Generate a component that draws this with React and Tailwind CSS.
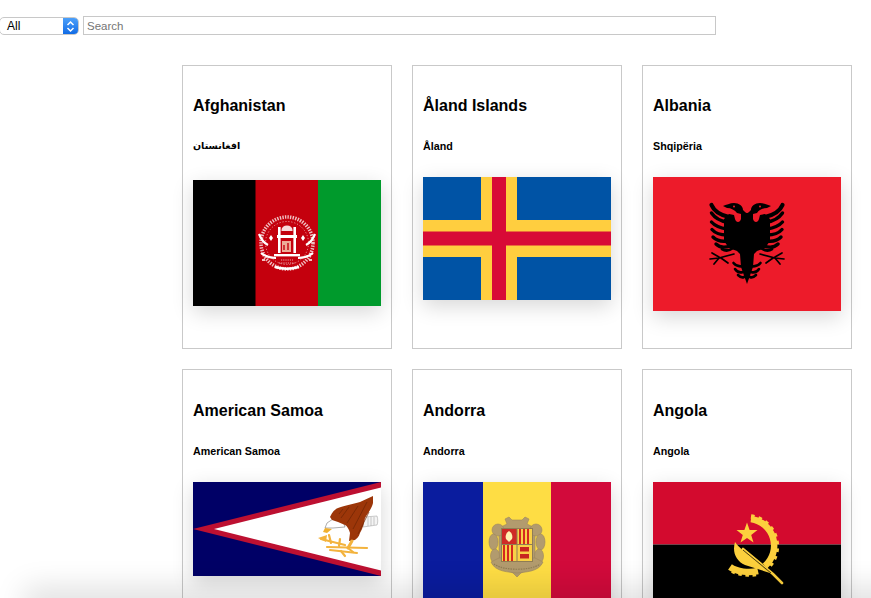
import React from "react";

const AfghanFlag = () => (
  <svg viewBox="0 0 188 126" className="block h-full w-full">
    <rect width="188" height="126" fill="#c4000d" />
    <rect width="62.5" height="126" fill="#000" />
    <rect x="125" width="63" height="126" fill="#009a2c" />
    <g fill="none" stroke="#fff">
      {/* wreath */}
      <circle cx="94" cy="63" r="26" strokeWidth="3.6" strokeDasharray="1.4 1.2" opacity=".75" />
      <circle cx="94" cy="63" r="21.5" strokeWidth="1" strokeDasharray="1.2 1.8" opacity=".55" />
      <path d="M66 54c2 5 5 9 9 11M122 54c-2 5-5 9-9 11M68 73c5 4 10 5 15 5M120 73c-5 4-10 5-15 5" strokeWidth="2.2" />
      <path d="M82 87c7 2 17 2 24 0" strokeWidth="2.4" />
      <path d="M72 80h-3M116 80h3" strokeWidth="1.5" />
    </g>
    {/* mosque */}
    <g fill="#fff">
      <path d="M88.5 50a5.5 4.6 0 0 1 11 0v1h-11z" opacity=".85" />
      <rect x="85" y="47" width="2.6" height="8" />
      <rect x="100.4" y="47" width="2.6" height="8" />
      <rect x="84" y="55" width="20" height="3" />
      <rect x="85" y="58" width="2.6" height="15" />
      <rect x="100.4" y="58" width="2.6" height="15" />
      <rect x="81" y="74" width="26" height="2.4" />
      <path d="M76 58l2-3 2 3-2 3zM112 58l-2-3-2 3 2 3z" />
    </g>
    <path d="M89 61h9v11h-9z" fill="#f3c9b0" opacity=".85" />
    <path d="M90 65h2v5h-2zM94 63h2v7h-2z" fill="#c4000d" opacity=".7" />
    <path d="M88 80h12M86 83h16" stroke="#fff" strokeWidth=".8" strokeDasharray="1.2 1" opacity=".8" />
  </svg>
);

const AlandFlag = () => (
  <svg viewBox="0 0 188 123" className="block h-full w-full">
    <rect width="188" height="123" fill="#0053a5" />
    <rect x="58" width="36" height="123" fill="#ffce3f" />
    <rect y="43" width="188" height="37" fill="#ffce3f" />
    <rect x="69" width="14" height="123" fill="#d80a36" />
    <rect y="54.5" width="188" height="14" fill="#d80a36" />
  </svg>
);

const AlbaniaFlag = () => {
  const half = (
    <g>
      {/* head */}
      <path d="M94 37 L90 33 C90 29 86 26 81 26 C77 26 73 28 70 29 L74 31 C78 31 82 33 84 36 L88 37z" fill="#000" />
      {/* body */}
      <path d="M94 36 L88 35 L88 42 C87 46 83 46 82 42 L81 38 L76 37 L71 42 L71 64 L76 71 L84 74 L87 77 L88 90 L94 107z" fill="#000" />
      {/* wing feathers */}
      <g fill="none" stroke="#000" strokeLinecap="round" strokeWidth="3.4">
        <path d="M58.5 28 C61 34 67 38 76 40" strokeWidth="4.2" />
        <path d="M58.5 36 C62 41 67 44 74 45" />
        <path d="M58.5 45 C62 49 67 51 74 52" />
        <path d="M59 52.5 C62 56 67 58 74 58" />
        <path d="M60 60 C63 63 67 65 74 64" />
        <path d="M63 67 C66 70 71 71 77 69" />
        <path d="M69 72 C72 74 76 74 80 71" strokeWidth="2.8" />
      </g>
      {/* tail feathers */}
      <g fill="none" stroke="#000" strokeLinecap="round" strokeWidth="2.6">
        <path d="M80.5 86 C83 89 86 90 90 89" />
        <path d="M82 92 C84 95 87 96 90 95" />
        <path d="M85 98 C87 100 89 101 91 100" />
      </g>
      {/* legs */}
      <g fill="none" stroke="#000" strokeLinecap="round" strokeWidth="1.7">
        <path d="M81 77 L66 81 L57 82" />
        <path d="M66 80 L59 76" />
        <path d="M66 81 L61 87" />
        <path d="M68 81 L75 86" />
      </g>
    </g>
  );
  return (
    <svg viewBox="0 0 188 134" className="block h-full w-full">
      <rect width="188" height="134" fill="#ed1b2a" />
      {half}
      <g transform="matrix(-1 0 0 1 188 0)">{half}</g>
      <circle cx="81" cy="29.5" r="1" fill="#ed1b2a" />
      <circle cx="107" cy="29.5" r="1" fill="#ed1b2a" />
    </svg>
  );
};

const SamoaFlag = () => (
  <svg viewBox="0 0 188 94" className="block h-full w-full">
    <rect width="188" height="94" fill="#000066" />
    <path d="M188 0V94L0 47z" fill="#bd1031" />
    <path d="M188 5.5V88.5L21 47z" fill="#fff" />
    {/* tail */}
    <path d="M171 35 L184 34 C185 37 185 41 184 43 L170 45z" fill="#f4f4f4" stroke="#999" strokeWidth=".5" />
    <path d="M175 35v9M178 35v9M181 35v8" stroke="#aaa" strokeWidth=".6" />
    {/* head */}
    <path d="M149 36 L140 37 L134 41 L132 46 L140 46 L152 45z" fill="#fff" stroke="#777" strokeWidth=".6" />
    <path d="M132 46 L130 50 L134 51 L139 47z" fill="#f0b030" />
    {/* wing and body */}
    <path d="M137 35 C139 30 142 27 145 26 C150 24 160 22 167 20 L180 14 L180 21 C179 26 175 31 172 36 C171 41 170 46 167 51 C166 55 163 57 162 58 L156 59 L157 51 C156 47 154 44 152 43 L145 40 L139 38z" fill="#9c3609" />
    <path d="M148 36 L156 25M154 41 L165 24M160 47 L174 20M165 52 L176 30M146 32 L150 27" stroke="#6e2505" strokeWidth=".7" fill="none" />
    {/* talons */}
    <g stroke="#f3b33d" strokeLinecap="round" fill="none">
      <path d="M128 57 L152 63" strokeWidth="2.2" />
      <path d="M134 65 L174 66" strokeWidth="2.2" />
      <path d="M137 68 L164 71" strokeWidth="2" />
      <path d="M159 59 L155 66" strokeWidth="3" />
      <path d="M136 53 L138 61M147 57 L146 64M148 69 L152 74M155 66 L160 70" strokeWidth="2.2" />
    </g>
    <path d="M125 56 L134 53 L133 60z" fill="#f3b33d" />
  </svg>
);

const AndorraFlag = () => (
  <svg viewBox="0 0 188 131" className="block h-full w-full">
    <rect width="188" height="131" fill="#fedd44" />
    <rect width="60" height="131" fill="#0a1c9e" />
    <rect x="128" width="60" height="131" fill="#d20a3b" />
    {/* surround with scrolls */}
    <g fill="#b29b6e" stroke="#9c875e" strokeWidth=".6">
      <path d="M76 46 L84 42 L82 37 L86 35 L89 38 L99 38 L102 35 L106 37 L104 42 L112 46 L112 84 L98 91 L94 95 L90 91 L76 84z" />
      <circle cx="75" cy="48" r="6" />
      <circle cx="113" cy="48" r="6" />
      <ellipse cx="70.5" cy="60" rx="4.5" ry="8" />
      <ellipse cx="117.5" cy="60" rx="4.5" ry="8" />
      <ellipse cx="72" cy="74" rx="4.5" ry="7" />
      <ellipse cx="116" cy="74" rx="4.5" ry="7" />
      <path d="M68 80 C72 90 86 90 94 91 C102 90 116 90 120 80 L112 76 L76 76z" />
    </g>
    <rect x="78" y="46" width="32" height="34" fill="#8f7d55" />
    {/* quarters */}
    <rect x="79" y="47" width="14.5" height="15" fill="#cf2a26" />
    <path d="M86 49c3 2 4 5 3 8l-3 3-3-3c-1-3 0-6 3-8z" fill="#fff3b0" />
    <rect x="94.5" y="47" width="14.5" height="15" fill="#f8d048" />
    <path d="M97 47v15M101 47v15M105 47v15" stroke="#d5281f" strokeWidth="2" />
    <rect x="79" y="63" width="14.5" height="16" fill="#f8d048" />
    <path d="M81 63v16M85 63v16M89 63v16" stroke="#d5281f" strokeWidth="2" />
    <rect x="94.5" y="63" width="14.5" height="16" fill="#f8d048" />
    <path d="M97 65h9v4.5h-9zM97 72h9v4.5h-9z" fill="#c8261f" />
    <path d="M71 82 C80 89 108 89 117 82" fill="none" stroke="#8f7d55" strokeWidth="1.2" strokeDasharray="1.5 1" />
  </svg>
);

const AngolaFlag = () => (
  <svg viewBox="0 0 188 125" className="block h-full w-full">
    <rect width="188" height="62.5" fill="#d30a2e" />
    <rect y="62.5" width="188" height="62.5" fill="#000" />
    <path d="M94 40.5l2.6 7.4 7.9.2-6.3 4.8 2.3 7.6-6.5-4.5-6.5 4.5 2.3-7.6-6.3-4.8 7.9-.2z" fill="#fcd03d" />
    <g fill="none" stroke="#fcd03d">
      {/* cog */}
      <path d="M98 37 A27 27 0 0 1 112 84" strokeWidth="6.5" />
      <path d="M98 34.5 A30 30 0 0 1 114.5 86" strokeWidth="4.5" strokeDasharray="3.5 4" />
      <path d="M77 85 C84 90 96 91 105 89" strokeWidth="6.5" />
      <path d="M79 89 C85 92 96 94 105 92" strokeWidth="4" strokeDasharray="3.5 3.5" />
    </g>
    {/* machete */}
    <path d="M82 60 C79 70 83 79 92 83 L117 91 L91 69 C87 66 84 63 82 60z" fill="#fcd03d" />
    <path d="M90 67 L120 92 L129 101" fill="none" stroke="#fcd03d" strokeWidth="2.6" strokeLinecap="round" />
    <path d="M90 68 L118 91" fill="none" stroke="#000" strokeWidth=".7" />
  </svg>
);

const countries = [
  { name: "Afghanistan", native: "افغانستان", nativeSize: "text-[9.5px]", Flag: AfghanFlag, titleTop: "mt-[30px]", flagBox: "mt-[27px] h-[126px]" },
  { name: "Åland Islands", native: "Åland", nativeSize: "text-[10.72px]", Flag: AlandFlag, titleTop: "mt-[30px]", flagBox: "mt-[24px] h-[123px]" },
  { name: "Albania", native: "Shqipëria", nativeSize: "text-[10.72px]", Flag: AlbaniaFlag, titleTop: "mt-[30px]", flagBox: "mt-[24px] h-[134px]" },
  { name: "American Samoa", native: "American Samoa", nativeSize: "text-[10.72px]", Flag: SamoaFlag, titleTop: "mt-[31px]", flagBox: "mt-[24px] h-[94px]" },
  { name: "Andorra", native: "Andorra", nativeSize: "text-[10.72px]", Flag: AndorraFlag, titleTop: "mt-[31px]", flagBox: "mt-[24px] h-[131px]" },
  { name: "Angola", native: "Angola", nativeSize: "text-[10.72px]", Flag: AngolaFlag, titleTop: "mt-[31px]", flagBox: "mt-[24px] h-[125px]" },
];

const Card = ({ country }) => {
  const { name, native, nativeSize, Flag, titleTop, flagBox } = country;
  return (
    <div className="h-[284px] border border-[#c9c9c9] bg-white px-[10px]">
      <h2 className={`${titleTop} text-[16px] leading-[20px] font-bold text-black`}>{name}</h2>
      <h6 className={`mt-[23px] ${nativeSize} leading-[14px] font-bold text-black`}>{native}</h6>
      <div className={`${flagBox} shadow-[0_6px_20px_rgba(0,0,0,0.16)]`}>
        <Flag />
      </div>
    </div>
  );
};

const App = () => {
  return (
    <div className="relative h-[598px] overflow-hidden bg-white font-['Liberation_Sans','DejaVu_Sans',sans-serif]">
      <div className="flex items-start gap-[4px] pt-[16px]">
        <div className="mt-[1px] -ml-[1px] flex h-[18px] w-[80px] items-center justify-between overflow-hidden rounded-[5px] border border-[#c8c8c8] bg-white">
          <span className="pl-[7px] text-[12px] text-black">All</span>
          <span className="flex h-[18px] w-[15px] items-center justify-center bg-gradient-to-b from-[#4fa3fb] to-[#0a68e4]">
            <svg width="9" height="13" viewBox="0 0 9 13" fill="none" stroke="#fff" strokeWidth="1.5">
              <path d="M1.5 5L4.5 2l3 3M1.5 8l3 3 3-3" />
            </svg>
          </span>
        </div>
        <input
          placeholder="Search"
          className="h-[19px] w-[633px] border border-[#c8c8c8] px-[3px] text-[11.5px] text-black outline-none placeholder:text-[#757575]"
        />
      </div>

      <div className="mt-[30px] ml-[182px] grid grid-cols-[repeat(3,210px)] gap-[20px]">
        {countries.map((c) => (
          <Card key={c.name} country={c} />
        ))}
      </div>

      {/* soft shadow along the bottom of the window */}
      <div className="pointer-events-none absolute right-[-40px] bottom-[-12px] left-[34px] h-[12px] shadow-[0_0_30px_10px_rgba(0,0,0,0.13)]" />
    </div>
  );
};

export default App;
